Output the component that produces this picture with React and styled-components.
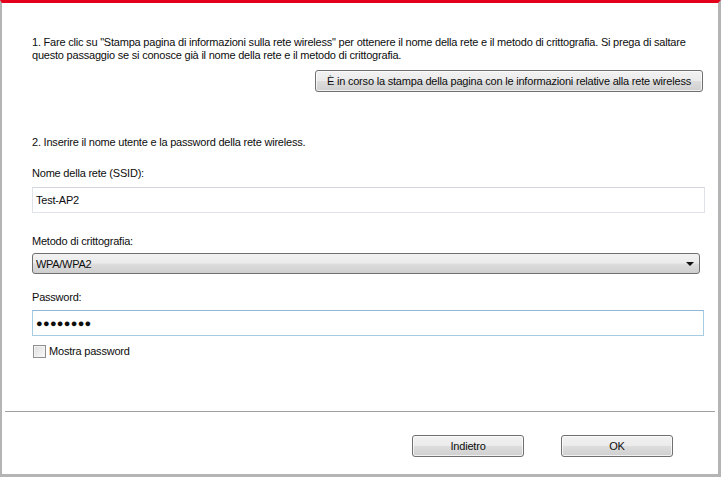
import React from 'react';
import styled, { createGlobalStyle } from 'styled-components';

const Global = createGlobalStyle`
  html, body { margin: 0; padding: 0; background: #fff; }
  body { font-family: "Liberation Sans", Arial, sans-serif; font-size: 11px; color: #0d0d0d; }
`;

const Window = styled.div`
  width: 721px;
  height: 477px;
  box-sizing: border-box;
  border-top: 3px solid #e4001b;
  border-left: 2px solid #b4b4b4;
  border-right: 3px solid #b4b4b4;
  border-bottom: 3px solid #b4b4b4;
  display: flex;
  flex-direction: column;
  background: #fff;
`;

const Main = styled.div`
  height: 408px;
  box-sizing: border-box;
  padding: 33px 13px 0 30px;
  display: flex;
  flex-direction: column;
`;

const Text = styled.div`
  line-height: 13px;
  white-space: nowrap;
  margin-top: ${p => p.$mt || 0}px;
  letter-spacing: -0.21px;
`;

const PrintRow = styled.div`
  display: flex;
  justify-content: flex-end;
  margin-top: 8px;
  padding-right: 2px;
`;

const WinButton = styled.button`
  height: 22px;
  width: ${p => p.$w ? `${p.$w}px` : 'auto'};
  padding: 0 ${p => p.$pad || 9}px;
  box-sizing: border-box;
  border: 1px solid #707070;
  border-radius: 3px;
  background: linear-gradient(#f2f2f2 0%, #ebebeb 48%, #dddddd 52%, #cfcfcf 100%);
  box-shadow: inset 0 0 0 1px rgba(255,255,255,0.7);
  font-family: "Liberation Sans", Arial, sans-serif;
  font-size: 11px;
  color: #0d0d0d;
  letter-spacing: -0.2px;
`;

const TextBox = styled.div`
  height: 26px;
  box-sizing: border-box;
  margin-top: ${p => p.$mt || 0}px;
  margin-right: ${p => p.$mr || 0}px;
  border: 1px solid ${p => p.$focus ? '#a7cbe3' : '#dfe3e8'};
  border-top-color: ${p => p.$focus ? '#8fb8d6' : '#d3d7dc'};
  display: flex;
  align-items: center;
  padding-left: 3px;
  letter-spacing: -0.2px;
`;

const Dots = styled.span`
  font-size: 11px;
  letter-spacing: 0.3px;
  font-weight: bold;
`;

const Select = styled.div`
  height: 21px;
  box-sizing: border-box;
  margin-top: 5px;
  margin-right: 5px;
  border: 1px solid #707070;
  border-radius: 3px;
  background: linear-gradient(#f2f2f2 0%, #ebebeb 48%, #dddddd 52%, #cfcfcf 100%);
  display: flex;
  align-items: center;
  justify-content: space-between;
  padding: 0 5px 0 3px;
  letter-spacing: -0.3px;
`;

const Arrow = styled.span`
  width: 0;
  height: 0;
  border-left: 4px solid transparent;
  border-right: 4px solid transparent;
  border-top: 4px solid #111;
  margin-top: 1px;
`;

const CheckRow = styled.label`
  display: flex;
  align-items: center;
  gap: 3px;
  margin-top: 9px;
  line-height: 13px;
  letter-spacing: -0.2px;
`;

const Box = styled.span`
  width: 13px;
  height: 13px;
  box-sizing: border-box;
  margin-left: 1px;
  border: 1px solid #8e8f8f;
  background: linear-gradient(135deg, #dcdcdc, #fbfbfb);
  box-shadow: inset 0 0 0 1px #f4f4f4;
`;

const Separator = styled.div`
  height: 1px;
  margin: 0 3px;
  background: #a0a0a0;
`;

const Footer = styled.div`
  flex: 1;
  display: flex;
  align-items: flex-start;
  padding: 23px 0 0 410px;
  gap: 37px;
`;

export default function App() {
  return (
    <>
      <Global />
      <Window>
        <Main>
          <Text>
            1. Fare clic su "Stampa pagina di informazioni sulla rete wireless" per ottenere il nome della rete e il metodo di crittografia. Si prega di saltare
          </Text>
          <Text>questo passaggio se si conosce già il nome della rete e il metodo di crittografia.</Text>
          <PrintRow>
            <WinButton $pad={11}>È in corso la stampa della pagina con le informazioni relative alla rete wireless</WinButton>
          </PrintRow>
          <Text $mt={44}>2. Inserire il nome utente e la password della rete wireless.</Text>
          <Text $mt={18}>Nome della rete (SSID):</Text>
          <TextBox $mt={7}>Test-AP2</TextBox>
          <Text $mt={22}>Metodo di crittografia:</Text>
          <Select>
            <span>WPA/WPA2</span>
            <Arrow />
          </Select>
          <Text $mt={17}>Password:</Text>
          <TextBox $mt={6} $mr={1} $focus>
            <Dots>●●●●●●●●</Dots>
          </TextBox>
          <CheckRow>
            <Box />
            Mostra password
          </CheckRow>
        </Main>
        <Separator />
        <Footer>
          <WinButton $w={112}>Indietro</WinButton>
          <WinButton $w={112}>OK</WinButton>
        </Footer>
      </Window>
    </>
  );
}
